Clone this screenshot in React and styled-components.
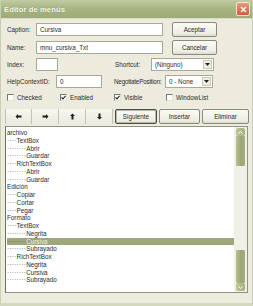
import { createGlobalStyle, styled } from 'styled-components';

const Global = createGlobalStyle`
body {
  margin: 0;
  background: #ecebdd;
  font-family: "Liberation Sans", Arial, sans-serif;
}
`

const Window = styled.div`
width: 253px;
height: 306px;
box-sizing: border-box;
display: flex;
flex-direction: column;
background: #ecebdd;
border-left: 1px solid #c9cfb0;
border-right: 1px solid #c9cfb0;
border-bottom: 3px solid #d4d9bd;
overflow: hidden;
`
const TitleBar = styled.div`
height: 18px;
flex: none;
display: flex;
align-items: center;
justify-content: space-between;
padding: 0 3px 0 4px;
background: linear-gradient(#c2cca2, #a9b585 45%, #9eab78);
border-bottom: 1px solid #d9dec5;
margin: 0 -1px;
`
const Title = styled.span`
color: #f6f7ee;
font-size: 7.6px;
font-weight: bold;
letter-spacing: 0.1px;
text-shadow: 0 0 1px #7f8c5a;
`
const CloseBox = styled.div`
width: 12px;
height: 12px;
border: 1px solid #f3e6dc;
border-radius: 2px;
background: linear-gradient(#e99a7c, #d4593a);
display: flex;
align-items: center;
justify-content: center;
`
const Body = styled.div`
flex: 1;
display: flex;
flex-direction: column;
padding: 3px 4px 0 4px;
`
const Row = styled.div`
display: flex;
align-items: center;
height: ${p => p.$h || 15}px;
margin-top: ${p => p.$mt || 0}px;
`
const Label = styled.span`
width: ${p => p.$w}px;
flex: none;
font-size: 6.3px;
letter-spacing: ${p => p.$tight ? '-0.2px' : '0'};
white-space: nowrap;
color: #2b2b2b;
padding-left: 2px;
box-sizing: border-box;
`
const Input = styled.div`
width: ${p => p.$w}px;
height: 13px;
flex: none;
box-sizing: border-box;
background: #fff;
border: 1px solid #a7ab96;
font-size: 6.3px;
color: #2b2b2b;
display: flex;
align-items: center;
padding-left: 3px;
`
const Spacer = styled.div`
width: ${p => p.$w}px;
flex: none;
`
const Button = styled.div`
width: ${p => p.$w}px;
height: ${p => p.$h || 15}px;
flex: none;
box-sizing: border-box;
border: 1px solid ${p => p.$default ? '#4d4d48' : '#8a8a80'};
box-shadow: ${p => p.$default ? 'inset 0 0 0 1px #b7b9a6' : 'none'};
border-radius: 2px;
background: linear-gradient(#fbfbf6, #eeede4 80%, #dcdacb);
font-size: 6.3px;
color: #2b2b2b;
display: flex;
align-items: center;
justify-content: center;
`
const Combo = styled.div`
width: ${p => p.$w}px;
height: 13px;
flex: none;
box-sizing: border-box;
background: #fff;
border: 1px solid #a7ab96;
display: flex;
align-items: center;
justify-content: space-between;
padding: 0 1px 0 3px;
font-size: 6.3px;
color: #2b2b2b;
`
const DropBtn = styled.div`
width: 9px;
height: 9px;
background: #eeede2;
border: 1px solid #c8c9b6;
box-sizing: border-box;
display: flex;
align-items: center;
justify-content: center;
`
const CheckItem = styled.div`
width: ${p => p.$w}px;
flex: none;
display: flex;
align-items: center;
gap: 3px;
font-size: 6.3px;
color: #2b2b2b;
`
const Box = styled.div`
width: 7px;
height: 7px;
box-sizing: border-box;
background: #fff;
border-top: 1px solid #777;
border-left: 1px solid #777;
border-right: 1px solid #e4e3d6;
border-bottom: 1px solid #e4e3d6;
display: flex;
align-items: center;
justify-content: center;
`
const ArrowGroup = styled.div`
display: flex;
margin-right: 2px;
`
const ArrowBtn = styled.div`
width: 27px;
height: 15px;
box-sizing: border-box;
border-right: 1px solid #c3c2b4;
background: linear-gradient(#f7f6f0, #ebeadf);
display: flex;
align-items: center;
justify-content: center;
&:first-child { border-left: 1px solid #c3c2b4; }
`
const ListBox = styled.div`
margin-top: 2px;
height: 167px;
box-sizing: border-box;
border: 1px solid #8f9480;
border-left-color: #6f725f;
background: #fff;
display: flex;
`
const Items = styled.div`
flex: 1;
padding: 2px 0 0 1px;
`
const Item = styled.div`
height: 7.75px;
line-height: 7.75px;
font-size: 6.3px;
white-space: nowrap;
color: ${p => p.$sel ? '#eef0df' : '#2b2b2b'};
background: ${p => p.$sel ? '#9ea77a' : 'transparent'};
`
const Dots = styled.span`
letter-spacing: 0.3px;
color: #555;
`
const ScrollTrack = styled.div`
width: 13px;
flex: none;
background: #f1f0e6;
display: flex;
flex-direction: column;
align-items: center;
padding: 1px 0;
box-sizing: border-box;
`
const ScrollArrow = styled.div`
width: 9px;
height: 8px;
flex: none;
border-radius: 2px;
background: linear-gradient(90deg, #bcc59c, #a4af7f);
display: flex;
align-items: center;
justify-content: center;
`
const Thumb = styled.div`
width: 9px;
height: ${p => p.$h}px;
flex: none;
border-radius: 1px;
background: linear-gradient(90deg, #b7c095, #9aa673 60%, #a6b083);
`
const Gap = styled.div`
flex: 1;
`

const Arrow = ({ rot }) => (
  <svg width="7" height="7" viewBox="0 0 7 7" style={{ transform: `rotate(${rot}deg)` }}>
    <path d="M0.5 3.5 L3 1 L3 2.5 L6.5 2.5 L6.5 4.5 L3 4.5 L3 6 Z" fill="#1e1e1e" />
  </svg>
)

const Tick = () => (
  <svg width="5" height="5" viewBox="0 0 5 5">
    <path d="M0.5 2.3 L2 3.8 L4.6 0.8" stroke="#2a2a2a" strokeWidth="1.2" fill="none" />
  </svg>
)

const Caret = () => (
  <svg width="5" height="3" viewBox="0 0 5 3">
    <path d="M0 0 L5 0 L2.5 3 Z" fill="#222" />
  </svg>
)

const items = [
  [0, 'archivo'], [1, 'TextBox'], [2, 'Abrir'], [2, 'Guardar'],
  [1, 'RichTextBox'], [2, 'Abrir'], [2, 'Guardar'],
  [0, 'Edición'], [1, 'Copiar'], [1, 'Cortar'], [1, 'Pegar'],
  [0, 'Formato'], [1, 'TextBox'], [2, 'Negrita'], [2, 'Cursiva', true], [2, 'Subrayado'],
  [1, 'RichTextBox'], [2, 'Negrita'], [2, 'Cursiva'], [2, 'Subrayado'],
]

export default function App()
{
  return (
    <Window>
      <Global />
      <TitleBar>
        <Title>Editor de menús</Title>
        <CloseBox>
          <svg width="7" height="7" viewBox="0 0 7 7">
            <path d="M1 1 L6 6 M6 1 L1 6" stroke="#fff" strokeWidth="1.4" />
          </svg>
        </CloseBox>
      </TitleBar>
      <Body>
        <Row $mt={0}>
          <Label $w={31}>Caption:</Label>
          <Input $w={127}>Cursiva</Input>
          <Spacer $w={9} />
          <Button $w={45}>Aceptar</Button>
        </Row>
        <Row $mt={3}>
          <Label $w={31}>Name:</Label>
          <Input $w={127}>mnu_cursiva_Txt</Input>
          <Spacer $w={9} />
          <Button $w={45}>Cancelar</Button>
        </Row>
        <Row $mt={3} $h={13}>
          <Label $w={31}>Index:</Label>
          <Input $w={22} />
          <Spacer $w={55} />
          <Label $w={38}>Shortcut:</Label>
          <Combo $w={63}>(Ninguno)<DropBtn><Caret /></DropBtn></Combo>
        </Row>
        <Row $mt={4} $h={13}>
          <Label $w={51}>HelpContextID:</Label>
          <Input $w={46}>0</Input>
          <Spacer $w={10} />
          <Label $w={53} $tight>NegotiatePosition:</Label>
          <Combo $w={48}>0 - None<DropBtn><Caret /></DropBtn></Combo>
        </Row>
        <Row $mt={5} $h={9}>
          <Spacer $w={2} />
          <CheckItem $w={53}><Box />Checked</CheckItem>
          <CheckItem $w={54}><Box><Tick /></Box>Enabled</CheckItem>
          <CheckItem $w={52}><Box><Tick /></Box>Visible</CheckItem>
          <CheckItem $w={60}><Box />WindowList</CheckItem>
        </Row>
        <Row $mt={7}>
          <ArrowGroup>
            <ArrowBtn><Arrow rot={0} /></ArrowBtn>
            <ArrowBtn><Arrow rot={180} /></ArrowBtn>
            <ArrowBtn><Arrow rot={90} /></ArrowBtn>
            <ArrowBtn><Arrow rot={270} /></ArrowBtn>
          </ArrowGroup>
          <Button $w={42} $default>Siguiente</Button>
          <Spacer $w={2} />
          <Button $w={41}>Insertar</Button>
          <Spacer $w={2} />
          <Button $w={47}>Eliminar</Button>
        </Row>
        <ListBox>
          <Items>
            {items.map(([lvl, text, sel], i) => (
              <Item key={i} $sel={sel}>
                {lvl > 0 && <Dots>{'····'.repeat(lvl)}</Dots>}{text}
              </Item>
            ))}
          </Items>
          <ScrollTrack>
            <ScrollArrow>
              <svg width="5" height="3" viewBox="0 0 5 3"><path d="M0.5 2.5 L2.5 0.5 L4.5 2.5" stroke="#fff" fill="none" strokeWidth="1" /></svg>
            </ScrollArrow>
            <Thumb $h={30} />
            <Gap />
            <Thumb $h={33} />
            <ScrollArrow>
              <svg width="5" height="3" viewBox="0 0 5 3"><path d="M0.5 0.5 L2.5 2.5 L4.5 0.5" stroke="#fff" fill="none" strokeWidth="1" /></svg>
            </ScrollArrow>
          </ScrollTrack>
        </ListBox>
      </Body>
    </Window>
  )
}
